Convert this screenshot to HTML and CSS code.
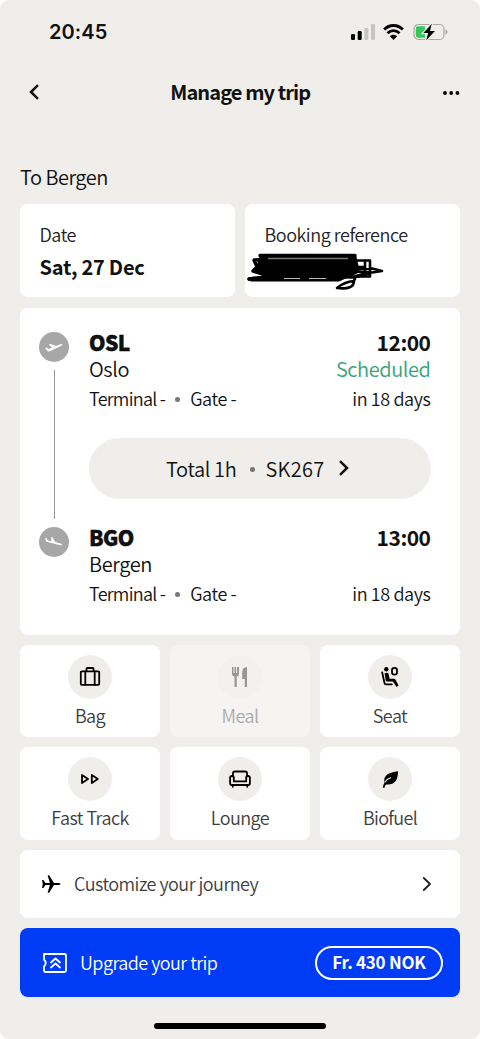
FILE: index.html
```html
<!DOCTYPE html>
<html lang="en">
<head>
<meta charset="utf-8">
<title>Manage my trip</title>
<link rel="stylesheet" href="styles.css">
</head>
<body>
<div class="screen">
  <div class="status">
    <span class="clock">20:45</span>
    <svg class="signal" width="26" height="16" viewBox="0 0 26 16"><rect x="1" y="10" width="4" height="6" rx="1.2"/><rect x="7.7" y="7" width="4" height="9" rx="1.2"/><g fill="#c6c5c3"><rect x="14.4" y="4" width="4" height="12" rx="1.2"/><rect x="21" y="0" width="4" height="16" rx="1.2"/></g></svg>
    <svg class="wifi" width="21" height="16" viewBox="0 0 21 16"><g fill="none" stroke="#000" stroke-width="2.9"><path d="M1.2 5.6C6.5.2 14.5.2 19.8 5.6"/><path d="M4.5 9.2c3.5-3.5 8.5-3.5 12 0"/></g><path d="M6.9 12.2c2-2 5.2-2 7.2 0L10.5 15.900z"/></svg>
    <svg class="battery" width="35" height="18" viewBox="0 0 35 18"><rect x="1" y="1.500" width="30" height="15" rx="4.500" fill="none" stroke="#a9a8a6" stroke-width="1.200"/><path d="M32.500 6.300q2 .8 2 2.700t-2 2.700z" fill="#a9a8a6"/><path d="M5.200 3.300H12v11.400H5.200q-2.400 0-2.400-2.400V5.700q0-2.400 2.400-2.400z" fill="#34c759"/><path d="M18.800.8 10.400 10h4.800l-2 7.200L22 8h-5z" stroke="#efeeeb" stroke-width="2.400" paint-order="stroke"/></svg>
  </div>

  <header class="nav">
    <svg width="12" height="18" viewBox="0 0 12 18"><path d="M10 2.200 3 9l7 6.800" class="line bold"/></svg>
    <h1 class="nav-title">Manage my trip</h1>
    <svg width="18" height="6" viewBox="0 0 18 6"><circle cx="3" cy="3" r="1.900"/><circle cx="9.200" cy="3" r="1.900"/><circle cx="15.400" cy="3" r="1.900"/></svg>
  </header>

  <main class="content">
    <h2 class="heading"><span>To Bergen</span></h2>
    <section class="summary">
      <div class="card info"><span class="label date-label">Date</span><b class="value">Sat, 27 Dec</b></div>
      <div class="card info"><span class="label ref-label">Booking reference</span>
        <svg class="redaction" width="142" height="42" viewBox="0 0 142 42"><g fill="none" stroke="#000" stroke-width="3.400" stroke-linecap="round" stroke-linejoin="round"><path d="M14 3.500H109L8 8l3 7-4 4 14 4M3 27l30-3 75 1 15-4"/><path d="M15 5h94l3 13-12 6H22l-12-4z" fill="#000" stroke-width="3"/><path d="M3 27q45-8 108-7l-18 8H6z" fill="#000" stroke-width="3"/><path d="M110 8.500h14v16h-14M119 9v14M105 15h13M108 18l18-1.500 10 2.500-10 1.500-17-1M107 30l2-3M91 36q7-6 17-7 0 9-17 7z" stroke-width="2.600"/></g><path d="M22 6.500h80" stroke="#777" stroke-width="1.300" fill="none"/><path d="M38 26.500h16m9 0h17" stroke="#bbb" stroke-width="1.100" fill="none"/></svg>
      </div>
    </section>

    <section class="card flight">
      <div class="track">
        <svg class="stop" width="30" height="30" viewBox="0 0 30 30"><circle cx="15" cy="15" r="15"/><path fill="#fff" d="m6.200 16.200 1.600-.6 2 1.300 3.300-1.400-3.400-3 1.900-.6 5.500 2.200 4.400-1.900q1.700-.5 1.900.3.100.8-1.400 1.500L10.200 19.500l-1.500-.2z"/></svg>
        <i class="rail"></i>
        <svg class="stop" width="30" height="30" viewBox="0 0 30 30"><circle cx="15" cy="15" r="15"/><path fill="#fff" d="m6.300 10.800 1.200.2 1.300 2.400 3.600.8-.2-4.200 1.500.4 2.400 4.700 5.500 1.300q1.700.7 1.500 1.500-.4.700-2 .3L7.800 14.800q-1-.4-1.100-1.200z"/></svg>
      </div>
      <div class="legs">
        <div class="leg">
          <div class="row main"><b class="code">OSL</b><b class="time">12:00</b></div>
          <div class="row city"><span>Oslo</span><span class="scheduled">Scheduled</span></div>
          <div class="row detail"><span class="gate"><span class="terminal">Terminal -</span><i class="dot"></i><span>Gate -</span></span><span class="days">in 18 days</span></div>
        </div>
        <div class="pill"><span class="total">Total 1h</span><i class="dot"></i><span class="number">SK267</span><svg width="12" height="18" viewBox="0 0 12 18"><path d="m2 2.200 7 6.800-7 6.800" class="line bold"/></svg></div>
        <div class="leg">
          <div class="row main"><b class="code">BGO</b><b class="time">13:00</b></div>
          <div class="row city"><span>Bergen</span></div>
          <div class="row detail"><span class="gate"><span class="terminal">Terminal -</span><i class="dot"></i><span>Gate -</span></span><span class="days">in 18 days</span></div>
        </div>
      </div>
    </section>

    <section class="extras">
      <div class="card tile"><div class="disc"><svg width="24" height="24" viewBox="0 0 24 24"><g class="line"><rect x="2.800" y="6.300" width="18.400" height="13.500" rx="1"/><path d="M8.500 6V3.700q0-.7.700-.7h5.600q.7 0 .7.700V6M7.300 6.300v13.500M16.700 6.300v13.500"/></g></svg></div><span>Bag</span></div>
      <div class="card tile off"><div class="disc"><svg width="24" height="24" viewBox="0 0 24 24"><path d="M4 2h1.500v6h1V2h1.600v6h1V2H11v7q0 2.300-2.300 2.800V22H6.500V11.800Q4 11.300 4 9zM19 2v20h-2.200v-8h-2.600V7q0-4.500 4.800-5z"/></svg></div><span>Meal</span></div>
      <div class="card tile"><div class="disc"><svg width="24" height="24" viewBox="0 0 24 24"><circle cx="8.300" cy="4.300" r="2.200"/><path d="M6.600 8.200q2.800-1.300 4 .5l1 5h4.600q.8 0 1.200.8l3.200 6-2 1.500-3.700-5.500H9q-1 0-1.300-1z"/><path d="m4.200 7.500 2.300 10.500q.3 1.300 1.600 1.300h5.800" class="line"/><rect x="14" y="2.800" width="5" height="6.800" rx="2.400" class="line"/></svg></div><span>Seat</span></div>
      <div class="card tile"><div class="disc"><svg width="24" height="24" viewBox="0 0 24 24"><path d="M4 8v8l6-4zM13.800 8v8l6-4z" class="line"/></svg></div><span class="fast">Fast Track</span></div>
      <div class="card tile"><div class="disc"><svg width="24" height="24" viewBox="0 0 24 24"><path d="M5 9V6.200Q5 4.500 6.700 4.500h10.600Q19 4.500 19 6.200V9M5.800 14.300h12.400V10.700q0-1.700 1.800-1.700t1.900 1.700v5.600q0 1.700-1.700 1.700H3.800q-1.700 0-1.700-1.700v-5.600Q2.200 9 4 9t1.800 1.700zM4.800 18.500v1.300M19.200 18.500v1.300" class="line"/></svg></div><span>Lounge</span></div>
      <div class="card tile"><div class="disc"><svg width="24" height="24" viewBox="0 0 24 24"><path d="M20 4.200q.2 6.500-2.600 10-3.200 4-9.200 3.200-1.600 1-1.600 3.400H4.800q.2-2.800 1.500-4.800Q5.500 9.600 10 7q2.800-1.700 10-2.800z"/><path d="M6.500 15.500q2-3.500 6.500-5" fill="none" stroke="#efeeeb" stroke-width="1.100"/></svg></div><span class="bio">Biofuel</span></div>
    </section>

    <div class="card link"><svg width="22" height="22" viewBox="0 0 22 22"><path d="M1 7h1.400l2 3.100h4.500L6.600 2.200h1.500L13 10.100h4.300q2 0 2.500.9-.5.900-2.500.9H13l-4.900 7.900H6.600l2.300-7.900H4.400L2.400 15H1l.8-4z"/></svg><span class="link-text">Customize your journey</span><svg class="go" width="12" height="16" viewBox="0 0 12 16"><path d="m2.800 2 6.200 6-6.200 6" class="line"/></svg></div>
    <div class="card upgrade"><svg width="26" height="22" viewBox="0 0 26 22"><path d="M2 2h20.500q1.500 0 1.500 1.500v15q0 1.500-1.500 1.500H3.500Q2 20 2 18.500v-4q3.500-3.500 0-7z" class="line"/><path d="m9 10.500 4.500-4 4.500 4M9 15.500l4.500-4 4.500 4" class="line"/></svg><span class="upgrade-text">Upgrade your trip</span><b class="price">Fr. 430 NOK</b></div>
  </main>
  <div class="home"></div>
</div>
</body>
</html>
```
FILE: styles.css
```css
* { box-sizing: border-box; }
body { margin: 0; background: #fff; color: #111; font-family: "Noto Sans CJK SC", "Noto Sans", sans-serif; font-size: 18px; font-weight: 350; }
svg { display: block; flex: none; }
h1, h2 { margin: 0; }
b { font-weight: 700; }
.screen { height: 1039px; background: #efeeeb; border-radius: 9px; display: flex; flex-direction: column; overflow: hidden; }
.line { fill: none; stroke: currentColor; stroke-width: 1.8; stroke-linecap: round; stroke-linejoin: round; }
.bold { stroke-width: 2.5; stroke-linecap: butt; stroke-linejoin: miter; }

.status { height: 64px; padding: 0 32px 0 49px; display: flex; align-items: center; }
.clock { font: 600 20px/24px Inter, sans-serif; letter-spacing: .1px; margin-right: auto; }
.signal { margin-right: 7px; }
.wifi { margin-right: 9px; }

.nav { height: 56px; padding: 0 20.500px 0 28px; display: grid; grid-template-columns: 40px 1fr 47px; align-items: center; }
.nav svg:last-child { justify-self: end; margin-top: 1px; }
.nav-title { text-align: center; font-size: 20px; line-height: 24px; letter-spacing: -.9px; white-space: nowrap; }

.content { padding: 45px 20px 0; display: flex; flex-direction: column; gap: 10.1px; }
.heading { font-size: 20px; line-height: 24px; font-weight: 350; letter-spacing: -.5px; margin-bottom: 4.900px; }
.card { background: #fff; border-radius: 8px; }
.summary { display: grid; grid-template-columns: 1fr 1fr; gap: 10px; }
.info { position: relative; height: 93.5px; padding: 17px 19.500px; display: flex; flex-direction: column; gap: 8.500px; }
.label { font-size: 18px; line-height: 26px; color: #222; letter-spacing: -.45px; }
.value { font-size: 20px; line-height: 24px; letter-spacing: -.25px; }
.redaction { position: absolute; left: 1px; top: 48px; }

.flight { height: 327.5px; padding: 24px 29.500px 0 19px; display: flex; gap: 20px; }
.track { width: 30px; display: flex; flex-direction: column; align-items: center; gap: 8px; height: 225px; }
.stop { fill: #a7a7a7; }
.rail { width: 1px; flex: 1; background: #999; }
.legs { flex: 1; margin-top: -1.500px; }
.row { display: flex; justify-content: space-between; white-space: nowrap; }
.main { font-size: 21px; line-height: 24px; letter-spacing: -.6px; }
.code { font-weight: 900; -webkit-text-stroke: .4px #000; }
.time { letter-spacing: -.5px; }
.city { font-size: 20px; line-height: 29px; letter-spacing: -.4px; }
.scheduled { color: #38a27c; }
.detail { font-size: 18px; line-height: 30px; letter-spacing: -.4px; }
.gate { display: flex; align-items: center; }
.terminal { letter-spacing: -.75px; }
.dot { width: 5px; height: 5px; border-radius: 50%; background: #777; margin: 2px 10px 0; }
.pill { height: 61px; border-radius: 31px; background: #efeeeb; margin: 24.500px 0 26.500px; padding-right: 4px; display: flex; align-items: center; justify-content: center; font-size: 20px; line-height: 28px; }
.pill span { padding-top: 1px; }
.total { letter-spacing: -.35px; }
.pill .dot { margin: 2px 10px 0 14px; }
.number { letter-spacing: .3px; }
.pill svg { margin-left: 13px; }

.extras { display: grid; grid-template-columns: repeat(3, 1fr); gap: 10px; }
.tile { height: 92.200px; padding-top: 10px; display: flex; flex-direction: column; align-items: center; gap: 3px; font-size: 18px; line-height: 27px; letter-spacing: -.55px; color: #3d3d3d; }
.bio { letter-spacing: -.7px; }
.disc { width: 44px; height: 44px; border-radius: 50%; background: #efeeeb; color: #000; display: grid; place-items: center; }
.off { background: #f5f4f3; color: #aaa; }
.off .disc { background: #f2f1ef; fill: #969696; }

.link, .upgrade { height: 68.600px; display: flex; align-items: center; font-size: 18px; line-height: 26px; }
.link { padding: 0 27px 0 21px; color: #3d3d3d; }
.link svg { color: #222; }
.link-text { margin-left: 11px; padding-bottom: 1px; letter-spacing: -.53px; }
.go { margin-left: auto; }
.upgrade { padding: 0 17px 0 22px; background: #003cf5; color: #fff; }
.upgrade-text { margin-left: 12px; padding-bottom: 1px; letter-spacing: -.53px; }
.price { margin-left: auto; width: 128px; height: 34px; border: 2px solid #fff; border-radius: 17px; text-align: center; font-size: 17px; line-height: 28px; letter-spacing: -.25px; white-space: nowrap; }
.home { width: 172px; height: 6px; border-radius: 3px; background: #000; margin: auto auto 10px; }
```
